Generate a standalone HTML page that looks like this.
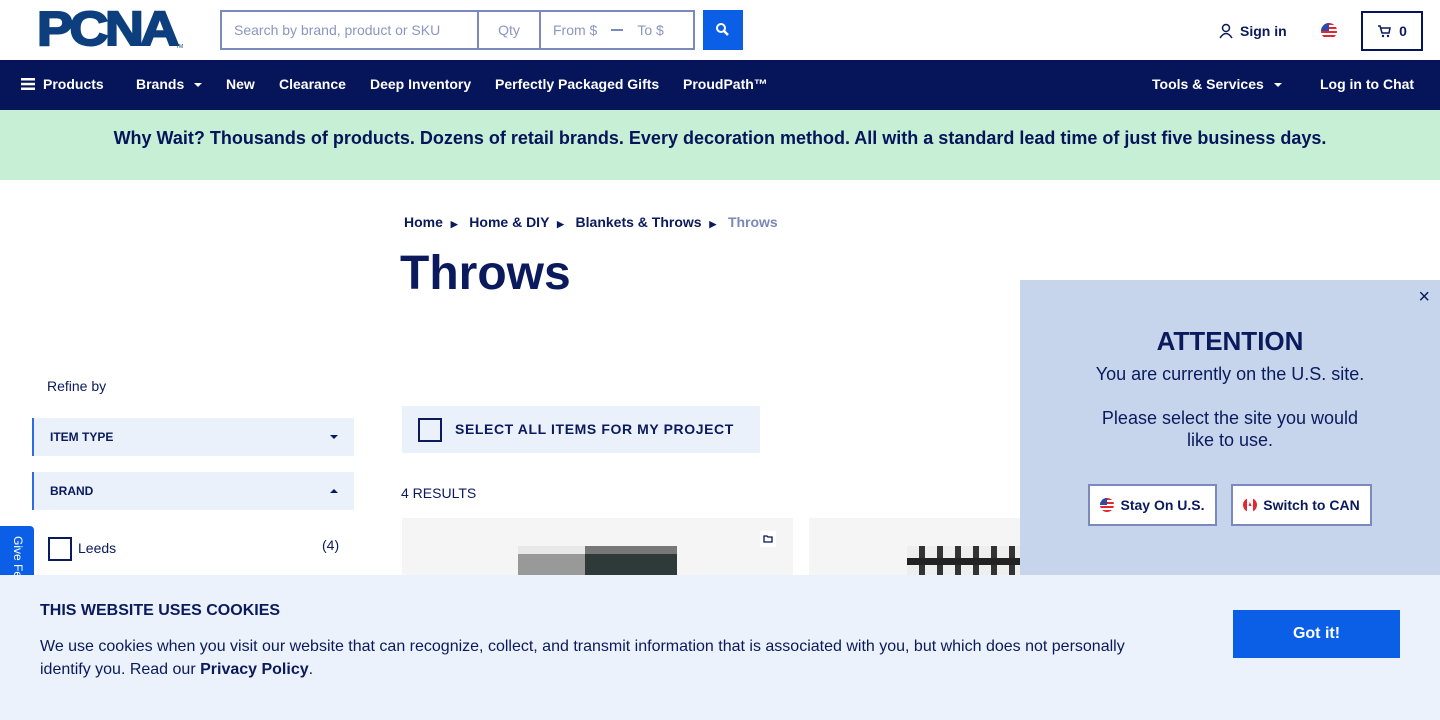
<!DOCTYPE html>
<html><head><meta charset="utf-8"><style>
*{box-sizing:border-box;margin:0;padding:0}
body{width:1440px;height:720px;overflow:hidden;font-family:"Liberation Sans",sans-serif;color:#0a1a5c;background:#fff;position:relative}
.abs{position:absolute}
.logo{left:37px;top:9px;font-weight:900;font-size:48px;color:#0d3f7e;letter-spacing:-3px;line-height:42px;transform:scaleX(1.12);transform-origin:left;-webkit-text-stroke:2px #0d3f7e}
.search{left:220px;top:10px;width:475px;height:40px;border:2px solid #7a8abf;display:flex;font-size:14px;color:#8a96c0}
.search div{display:flex;align-items:center;height:100%}
.sbtn{left:703px;top:10px;width:40px;height:40px;background:#0a5fe6}
.nav{left:0;top:60px;width:1440px;height:50px;background:#06155a;color:#fff;font-weight:bold;font-size:14px}
.nav span{position:absolute;top:16px}
.banner{left:0;top:110px;width:1440px;height:70px;background:#c6efd6;text-align:center;font-weight:bold;font-size:18px;line-height:56px;color:#06155a}
.caret{display:inline-block;border-left:4px solid transparent;border-right:4px solid transparent;border-top:4px solid #fff;margin-left:10px;vertical-align:middle}
.filter{left:32px;width:322px;height:38px;background:#eaf1fb;border-left:2px solid #2f6be0;font-size:12px;font-weight:bold;line-height:38px;padding-left:16px}
.card{top:518px;background:#f5f5f5;height:60px}
.modal{left:1020px;top:280px;width:420px;height:300px;background:#c6d5ec;text-align:center;color:#0a1a5c}
.mbtn{position:absolute;top:204px;height:42px;border:2px solid #7a8abf;background:#fff;font-weight:bold;font-size:14px;line-height:38px}
.cookie{left:0;top:575px;width:1440px;height:145px;background:#ebf2fb}
</style></head><body>
<div class="abs logo">PCNA</div>
<div class="abs" style="left:176px;top:44px;font-size:5px;color:#0d3f7e">TM</div>
<div class="abs search">
<div style="width:257px;padding-left:12px;border-right:2px solid #7a8abf">Search by brand, product or SKU</div>
<div style="width:62px;justify-content:center;border-right:2px solid #7a8abf">Qty</div>
<div style="padding-left:12px">From $ <span style="display:inline-block;width:12px;height:2px;background:#7a8abf;margin:0 14px"></span> To $</div>
</div>
<div class="abs sbtn"><svg width="40" height="40"><circle cx="18" cy="18" r="4" fill="none" stroke="#fff" stroke-width="2"/><line x1="21" y1="21" x2="25" y2="25" stroke="#fff" stroke-width="2.5"/></svg></div>
<div class="abs" style="left:1218px;top:23px;font-weight:bold;font-size:14px"><svg width="16" height="16" style="vertical-align:-3px;margin-right:6px"><circle cx="8" cy="5" r="3.5" fill="none" stroke="#0a1a5c" stroke-width="1.5"/><path d="M2 15 Q8 6 14 15" fill="none" stroke="#0a1a5c" stroke-width="1.5"/></svg>Sign in</div>
<div class="abs" style="left:1321px;top:23px;width:16px;height:16px;border-radius:50%;overflow:hidden;background:repeating-linear-gradient(#e3262f 0 2px,#fff 2px 4px)"><div style="width:8px;height:8px;background:#2f4aa8"></div></div>
<div class="abs" style="left:1361px;top:11px;width:62px;height:40px;border:2px solid #06155a;font-weight:bold;font-size:14px;line-height:36px;text-align:center"><svg width="14" height="14" style="vertical-align:-2px;margin-right:8px"><path d="M1 2 H3 L5 9 H12 L13 4 H4" fill="none" stroke="#0a1a5c" stroke-width="1.5"/><circle cx="6" cy="12" r="1.2" fill="#0a1a5c"/><circle cx="11" cy="12" r="1.2" fill="#0a1a5c"/></svg>0</div>
<div class="abs nav">
<span style="left:21px"><svg width="14" height="12" style="vertical-align:-1px;margin-right:8px"><rect y="0" width="14" height="2.5" fill="#fff"/><rect y="4.8" width="14" height="2.5" fill="#fff"/><rect y="9.5" width="14" height="2.5" fill="#fff"/></svg>Products</span>
<span style="left:136px">Brands<i class="caret"></i></span>
<span style="left:226px">New</span><span style="left:279px">Clearance</span><span style="left:370px">Deep Inventory</span><span style="left:495px">Perfectly Packaged Gifts</span><span style="left:683px">ProudPath™</span>
<span style="left:1152px">Tools &amp; Services<i class="caret"></i></span><span style="left:1320px">Log in to Chat</span>
</div>
<div class="abs banner">Why Wait? Thousands of products. Dozens of retail brands. Every decoration method. All with a standard lead time of just five business days.</div>
<div class="abs" style="left:404px;top:214px;font-size:14px;font-weight:bold">Home &nbsp;<span style="font-size:9px">▶</span>&nbsp;&nbsp; Home &amp; DIY &nbsp;<span style="font-size:9px">▶</span>&nbsp;&nbsp; Blankets &amp; Throws &nbsp;<span style="font-size:9px">▶</span>&nbsp;&nbsp; <span style="color:#7a88b8">Throws</span></div>
<div class="abs" style="left:400px;top:246px;font-size:48px;font-weight:bold">Throws</div>
<div class="abs" style="left:47px;top:378px;font-size:14px">Refine by</div>
<div class="abs filter" style="top:418px">ITEM TYPE<i class="caret" style="position:absolute;right:16px;top:17px;border-top-color:#0a1a5c"></i></div>
<div class="abs filter" style="top:472px">BRAND<i style="position:absolute;right:16px;top:17px;border-left:4px solid transparent;border-right:4px solid transparent;border-bottom:4px solid #0a1a5c"></i></div>
<div class="abs" style="left:48px;top:537px;width:24px;height:24px;border:2px solid #0a1a5c"></div>
<div class="abs" style="left:78px;top:540px;font-size:14px">Leeds</div>
<div class="abs" style="left:322px;top:537px;font-size:14px">(4)</div>
<div class="abs" style="left:0;top:526px;width:34px;height:50px;background:#0a5fe6;border-radius:0 4px 0 0;color:#fff;font-size:12px;writing-mode:vertical-rl;white-space:nowrap;padding:10px 9px 0 0">Give Fe</div>
<div class="abs" style="left:402px;top:406px;width:358px;height:47px;background:#eaf1fb"><div class="abs" style="left:16px;top:12px;width:24px;height:24px;border:2px solid #0a1a5c"></div><div class="abs" style="left:53px;top:15px;font-size:14px;font-weight:bold;letter-spacing:.6px">SELECT ALL ITEMS FOR MY PROJECT</div></div>
<div class="abs" style="left:401px;top:485px;font-size:14px">4 RESULTS</div>
<div class="abs card" style="left:402px;width:391px"><div class="abs" style="left:116px;top:28px;width:67px;height:32px;background:#999;border-top:8px solid #e8e8e8"></div><div class="abs" style="left:183px;top:28px;width:92px;height:32px;background:#2e3a3a;border-top:8px solid #777"></div><div class="abs" style="left:358px;top:13px;width:16px;height:16px;background:#fff"><svg width="16" height="16"><path d="M4 5 H7 L8 6 H12 V11 H4 Z" fill="none" stroke="#06155a" stroke-width="1.3"/></svg></div></div>
<div class="abs card" style="left:809px;width:211px"><div class="abs" style="left:98px;top:28px;width:113px;height:32px;background:linear-gradient(transparent 12px,#222 12px 19px,transparent 19px),repeating-linear-gradient(90deg,#eee 0 12px,#333 12px 18px)"></div></div>
<div class="abs modal">
<div class="abs" style="right:10px;top:6px;font-size:20px">×</div>
<div style="margin-top:46px;font-size:26px;font-weight:bold">ATTENTION</div>
<div style="font-size:18px;margin-top:6px;line-height:22px">You are currently on the U.S. site.<br><br>Please select the site you would<br>like to use.</div>
<div class="mbtn" style="left:68px;width:129px"><svg width="14" height="14" style="vertical-align:-2px;margin-right:6px"><defs><clipPath id="c1"><circle cx="7" cy="7" r="7"/></clipPath></defs><g clip-path="url(#c1)"><rect width="14" height="14" fill="#fff"/><rect y="0" width="14" height="2" fill="#e3262f"/><rect y="4" width="14" height="2" fill="#e3262f"/><rect y="8" width="14" height="2" fill="#e3262f"/><rect y="12" width="14" height="2" fill="#e3262f"/><rect width="7" height="7" fill="#2f4aa8"/></g></svg>Stay On U.S.</div>
<div class="mbtn" style="left:211px;width:141px"><svg width="14" height="14" style="vertical-align:-2px;margin-right:6px"><defs><clipPath id="c2"><circle cx="7" cy="7" r="7"/></clipPath></defs><g clip-path="url(#c2)"><rect width="14" height="14" fill="#fff"/><rect width="4" height="14" fill="#e3262f"/><rect x="10" width="4" height="14" fill="#e3262f"/><path d="M7 4 L8.5 8 H5.5 Z" fill="#e3262f"/></g></svg>Switch to CAN</div>
</div>
<div class="abs cookie">
<div class="abs" style="left:40px;top:27px;font-size:16px;font-weight:bold">THIS WEBSITE USES COOKIES</div>
<div class="abs" style="left:40px;top:60px;width:1100px;font-size:16px;line-height:23px">We use cookies when you visit our website that can recognize, collect, and transmit information that is associated with you, but which does not personally identify you. Read our <b>Privacy Policy</b>.</div>
<div class="abs" style="left:1233px;top:35px;width:167px;height:48px;background:#0a5fe6;color:#fff;font-weight:bold;font-size:16px;text-align:center;line-height:48px">Got it!</div>
</div>
</body></html>
